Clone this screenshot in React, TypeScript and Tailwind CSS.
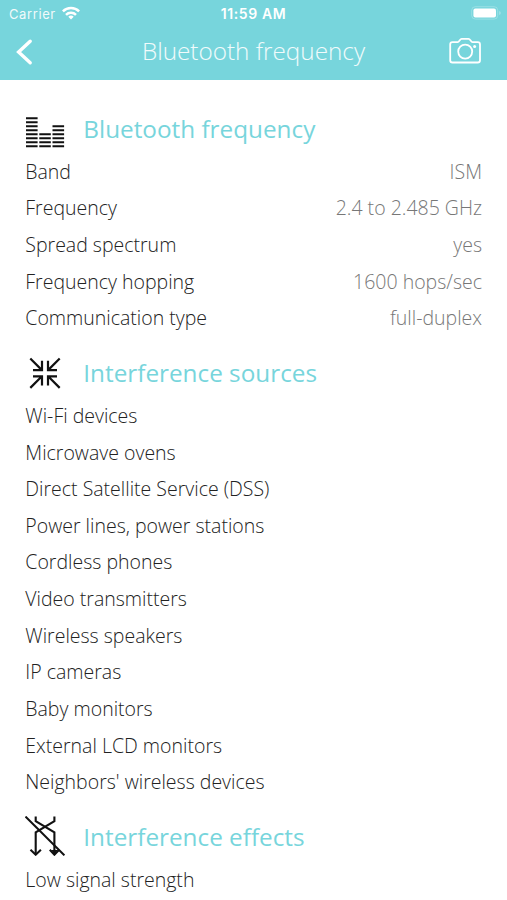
import React, { FC, ReactNode } from 'react';

type Row = {
  label: string;
  value?: string;
}

type SectionProps = {
  title: string;
  icon: ReactNode;
  rows: Row[];
}

const EqualizerIcon = () => (
  <svg width="40" height="40" viewBox="0 0 40 40" fill="none" stroke="#111" strokeWidth="2">
    <path d="M1 8.3h11.6M1 12.3h11.6M1 16.3h11.6M1 20.3h11.6M1 24.3h11.6M1 28.3h11.6M1 32.3h11.6M1 36.3h11.6" />
    <path d="M14.3 24.3h11.5M14.3 28.3h11.5M14.3 32.3h11.5M14.3 36.3h11.5" />
    <path d="M27.5 16.3h11.6M27.5 20.3h11.6M27.5 24.3h11.6M27.5 28.3h11.6M27.5 32.3h11.6M27.5 36.3h11.6" />
  </svg>
);

const ConvergeIcon = () => (
  <svg width="40" height="40" viewBox="0 0 40 40" fill="none" stroke="#111" strokeWidth="2.2">
    <path d="M5.3 4.5l11.6 11.6M8 16.1h9V6.8" />
    <path d="M34.7 4.5L23.1 16.1M32 16.1h-9V6.8" />
    <path d="M5.3 33.9l11.6-11.6M8 22.3h9v9.3" />
    <path d="M34.7 33.9L23.1 22.3M32 22.3h-9v9.3" />
  </svg>
);

const CrossedArrowsIcon = () => (
  <svg className="-mt-[3px]" width="40" height="40" viewBox="0 0 40 40" fill="none" stroke="#111" strokeWidth="2.1">
    <path d="M0.5 0.6L39.4 39.3" />
    <path d="M10.7 0.5v4.7l18.7 11.2v22M29.4 0.5v4.7L10.7 16.4v22" />
    <path d="M5.5 33.8l5.2 4.9 5.2-4.9M24.8 33.8l4.6 4.9 4.8-4.9" />
    <path d="M26 34h7l-3.5 4z" fill="#111" stroke="none" />
  </svg>
);

const sections: SectionProps[] = [
  {
    title: 'Bluetooth frequency',
    icon: <EqualizerIcon />,
    rows: [
      { label: 'Band', value: 'ISM' },
      { label: 'Frequency', value: '2.4 to 2.485 GHz' },
      { label: 'Spread spectrum', value: 'yes' },
      { label: 'Frequency hopping', value: '1600 hops/sec' },
      { label: 'Communication type', value: 'full-duplex' },
    ],
  },
  {
    title: 'Interference sources',
    icon: <ConvergeIcon />,
    rows: [
      { label: 'Wi-Fi devices' },
      { label: 'Microwave ovens' },
      { label: 'Direct Satellite Service (DSS)' },
      { label: 'Power lines, power stations' },
      { label: 'Cordless phones' },
      { label: 'Video transmitters' },
      { label: 'Wireless speakers' },
      { label: 'IP cameras' },
      { label: 'Baby monitors' },
      { label: 'External LCD monitors' },
      { label: "Neighbors' wireless devices" },
    ],
  },
  {
    title: 'Interference effects',
    icon: <CrossedArrowsIcon />,
    rows: [{ label: 'Low signal strength' }],
  },
];

const StatusBar = () => (
  <div className="grid h-7 grid-cols-3 items-center px-[7px] font-['Inter',sans-serif] text-[13px] leading-none text-white">
    <div className="flex items-center gap-[6px] pl-0.5">
      <span className="tracking-[0.6px] opacity-90">Carrier</span>
      <svg className="-mt-0.5" width="18" height="14" viewBox="0 0 18 14" fill="none" stroke="white" strokeWidth="2.5">
        <path d="M0.9 5.4a11.5 11.5 0 0 1 16.2 0" />
        <path d="M4 8.8a7.1 7.1 0 0 1 10 0" />
        <path d="M9 13.5l-2.7-2.7a3.8 3.8 0 0 1 5.4 0z" fill="white" stroke="none" />
      </svg>
    </div>
    <span className="text-center text-[14px] font-semibold tracking-[0.6px] whitespace-nowrap">11:59 AM</span>
    <svg className="-mt-0.5 -mr-0.5 justify-self-end" width="31" height="14" viewBox="0 0 31 14">
      <rect x="0.7" y="0.7" width="26" height="12.4" rx="3.6" fill="none" stroke="white" strokeOpacity="0.25" />
      <rect x="2.4" y="2.4" width="22.6" height="9" rx="2" fill="white" />
      <path d="M28.3 5v4c1.8-.6 1.8-3.4 0-4z" fill="white" fillOpacity="0.4" />
    </svg>
  </div>
);

const NavBar = () => (
  <div className="grid h-[51.5px] grid-cols-[60px_1fr_60px] items-center pb-1">
    <svg className="ml-4" width="18" height="28" viewBox="0 0 18 28" fill="none" stroke="white" strokeWidth="3.4" strokeLinecap="round">
      <path d="M14.2 3.2L2.6 14.1l11.6 10.7" />
    </svg>
    <h1 className="pb-px text-center text-[24.3px] leading-none font-light text-white/90">Bluetooth frequency</h1>
    <svg className="-mt-px ml-[1.5px]" width="32" height="28" viewBox="0 0 32 28" fill="none" stroke="white" strokeWidth="1.8" strokeLinejoin="round">
      <path d="M3.5 5.1h5.2c1.6 0 2.2-3.3 4-3.3h6.8c1.8 0 2.4 3.3 4 3.3h5.2c1.4 0 2.3.9 2.3 2.3v15.8c0 1.4-.9 2.3-2.3 2.3H3.5c-1.4 0-2.3-.9-2.3-2.3V7.4c0-1.4.9-2.3 2.3-2.3z" />
      <circle cx="16.2" cy="14.6" r="7" />
      <circle cx="25.6" cy="9.6" r="1.5" fill="white" stroke="none" />
    </svg>
  </div>
);

const Section: FC<SectionProps> = ({ title, icon, rows }) => (
  <section>
    <div className="flex h-[60.8px] items-center pt-[13.5px]">
      <div className="w-[58px] shrink-0">{icon}</div>
      <h2 className="text-[24.3px] leading-none text-[#77d5dc]">{title}</h2>
    </div>
    {rows.map((row) => (
      <div key={row.label} className="flex h-[36.67px] items-center justify-between text-[19.5px] leading-none font-light">
        <span className="text-[#222]">{row.label}</span>
        {row.value && <span className="text-[#777]">{row.value}</span>}
      </div>
    ))}
  </section>
);

const App = () => {
  return (
    <div className="h-[900px] overflow-hidden bg-white font-['Open_Sans',sans-serif]">
      <header className="bg-[#77d5dc]">
        <StatusBar />
        <NavBar />
      </header>
      <main className="pr-[25px] pl-[25.3px] pt-[12.9px]">
        {sections.map((section) => (
          <Section key={section.title} {...section} />
        ))}
      </main>
    </div>
  );
};

export default App;
